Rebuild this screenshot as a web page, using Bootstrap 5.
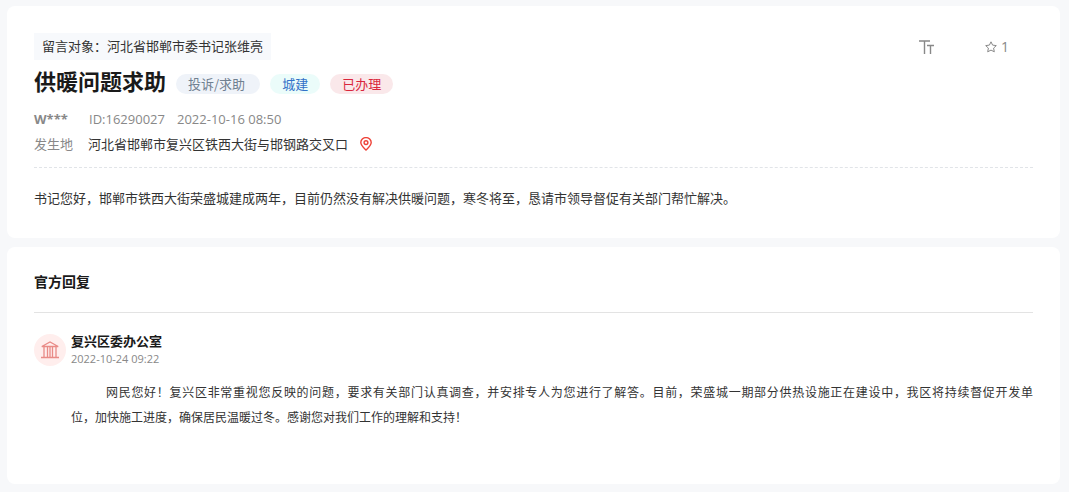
<!DOCTYPE html>
<html lang="zh-CN">
<head>
<meta charset="utf-8">
<meta name="viewport" content="width=device-width, initial-scale=1">
<title>供暖问题求助</title>
<link href="https://cdn.jsdelivr.net/npm/bootstrap@5.3.0/dist/css/bootstrap.min.css" rel="stylesheet">
<style>
body{background:#f7f8fa;font-family:"Noto Sans CJK SC",sans-serif;font-size:13px;line-height:25px;color:#333;padding:6px 9px 8px 7px}
.panel{border:0;border-radius:8px;padding:27px;color:#333}
.panel-message{padding-bottom:28px}
.panel-reply{margin-top:9px;padding-top:22px;padding-bottom:55px}
.latin{font-family:"Open Sans","Noto Sans CJK SC",sans-serif}
.target{background:#f7f9fc;padding:0 8px 2px;line-height:25px}
.tools{gap:50px;padding-right:24px;line-height:28px}
.tool{background:none;border:0;padding:0;color:#888;gap:4px;font-size:14px;line-height:28px}
.headline{gap:10px;margin-top:6px}
.headline h1{font-size:22px;font-weight:700;line-height:27px;color:#1a1a1a}
.pill{border-radius:10px;padding:0 12px;line-height:20px}
.pill-kind{background:#eff3f9;color:#708090;padding-right:15px}
.pill-area{background:#ebfcfa;color:#3272c8}
.pill-done{background:#fae8ea;color:#d9263c}
.meta{color:#888;margin-top:13px;line-height:24px}
.meta .user{width:55px;font-weight:700}
.meta .ident{width:88px}
.place-label{color:#888;margin-right:15px}
.pin{margin-left:12px}
.divided{border-bottom:1px dashed #e1e4e8;padding-bottom:11px}
.message{margin-top:17px}
.section-title{font-size:14px;font-weight:700;line-height:25px;color:#1a1a1a;padding-bottom:18px;border-bottom:1px solid #e3e3e3}
.reply{gap:5px;margin-top:18px}
.avatar{width:32px;height:32px;margin-top:3px;background:#ffeeed;border-radius:50%}
.office{font-size:13px;font-weight:700;line-height:19px;color:#1a1a1a}
.reply-date{font-size:11px;line-height:18px;color:#888}
.answer{font-size:12px;margin-top:11px}
.answer .opening{display:block;text-indent:35px;text-align:justify;text-align-last:justify}
</style>
</head>
<body>
<main>
  <article class="card panel panel-message">
    <div class="d-flex justify-content-between align-items-start">
      <span class="target">留言对象：河北省邯郸市委书记张维亮</span>
      <div class="tools d-flex align-items-center">
        <button class="tool d-flex align-items-center" type="button" aria-label="字号">
          <svg width="16" height="14" viewBox="0 0 16 14" fill="none" stroke="currentColor" stroke-width="1.4"><path d="M0 1h11M5.500 1v13M8 5.500h7M11.500 5.500V14"/></svg>
        </button>
        <button class="tool latin d-flex align-items-center" type="button">
          <svg width="12" height="12" viewBox="0 0 12 12" fill="none" stroke="currentColor" stroke-linejoin="round"><path d="M6 .8l1.600 3.300 3.700.500-2.700 2.500.700 3.700L6 9.100l-3.300 1.700.7-3.700L.7 4.600l3.700-.5z"/></svg>
          <span>1</span>
        </button>
      </div>
    </div>
    <div class="headline d-flex align-items-end flex-wrap">
      <h1 class="m-0">供暖问题求助</h1>
      <span class="pill pill-kind">投诉/求助</span>
      <span class="pill pill-area">城建</span>
      <span class="pill pill-done">已办理</span>
    </div>
    <div class="meta latin d-flex">
      <span class="user">W***</span>
      <span class="ident">ID:16290027</span>
      <time>2022-10-16 08:50</time>
    </div>
    <div class="divided d-flex align-items-center">
      <span class="place-label">发生地</span>
      <span>河北省邯郸市复兴区铁西大街与邯钢路交叉口</span>
      <svg class="pin" width="12" height="14" viewBox="0 0 12 14" fill="none" stroke="#ee4238" stroke-width="1.4"><path d="M6 13.100C4.200 11.300.8 8.300.8 5.600a5.200 5 0 0 1 10.400 0C11.200 8.300 7.800 11.300 6 13.100z"/><circle cx="6" cy="5.600" r="1.900"/></svg>
    </div>
    <p class="message mb-0">书记您好，邯郸市铁西大街荣盛城建成两年，目前仍然没有解决供暖问题，寒冬将至，恳请市领导督促有关部门帮忙解决。</p>
  </article>

  <section class="card panel panel-reply">
    <h2 class="section-title m-0">官方回复</h2>
    <div class="reply d-flex align-items-start">
      <div class="avatar d-flex align-items-center justify-content-center flex-shrink-0">
        <svg width="18" height="18" viewBox="0 0 18 18" fill="none" stroke="#e98b87" stroke-width="1.300"><path d="M.8 5.500L9 1l8.200 4.500zM0 16.500h18M3 6v10M6.500 6v10M9 6v10M11.500 6v10M15 6v10"/></svg>
      </div>
      <div class="flex-grow-1">
        <h3 class="office m-0">复兴区委办公室</h3>
        <time class="reply-date latin d-block">2022-10-24 09:22</time>
        <p class="answer mb-0"><span class="opening">网民您好！复兴区非常重视您反映的问题，要求有关部门认真调查，并安排专人为您进行了解答。目前，荣盛城一期部分供热设施正在建设中，我区将持续督促开发单</span>位，加快施工进度，确保居民温暖过冬。感谢您对我们工作的理解和支持！</p>
      </div>
    </div>
  </section>
</main>
<script src="https://cdn.jsdelivr.net/npm/bootstrap@5.3.0/dist/js/bootstrap.bundle.min.js"></script>
</body>
</html>
